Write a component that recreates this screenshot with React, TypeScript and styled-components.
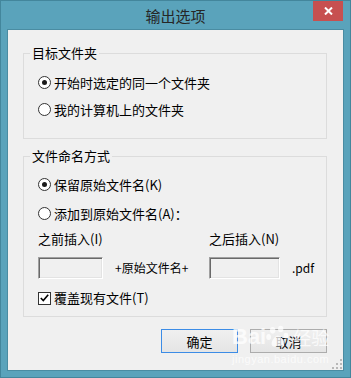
import React, { useState } from 'react'
import styled, { createGlobalStyle, css } from 'styled-components';

const GlobalStyle = createGlobalStyle`
  html, body {
    margin: 0;
    padding: 0;
    background: #5aa3bb;
  }
  body {
    font-family: "Noto Sans CJK SC", "Noto Sans", sans-serif;
    color: #000;
  }
`;

const Window = styled.div`
  position: relative;
  width: 351px;
  height: 378px;
  box-sizing: border-box;
  display: flex;
  flex-direction: column;
  padding: 0 6px 6px;
  background: #5aa3bb;
  border: 1px solid #43869c;
`;

const TitleBar = styled.div`
  display: grid;
  grid-template-columns: 1fr auto 1fr;
  height: 28px;
  flex-shrink: 0;
`;

const Title = styled.div`
  grid-column: 2;
  font-size: 15px;
  line-height: 29px;
  color: #262626;
`;

const CloseButton = styled.div`
  grid-column: 3;
  justify-self: end;
  display: flex;
  align-items: center;
  justify-content: center;
  width: 30px;
  height: 20px;
  margin-right: 1px;
  background: #c75050;
`;

const Client = styled.div`
  position: relative;
  flex: 1;
  display: flex;
  flex-direction: column;
  padding: 14px 16px 0 15px;
  background: #f0f0f0;
  border: 1px solid #4a8ca2;
`;

const Group = styled.fieldset<{ $gap?: number }>`
  margin: ${p => p.$gap || 0}px 0 0;
  padding: 0 6px ${p => p.$gap ? 9 : 15}px 6px;
  min-width: 0;
  border: 1px solid #dcdcdc;
  display: flex;
  flex-direction: column;
`;

const Legend = styled.legend`
  padding: 0 2px;
  font-size: 13px;
  line-height: 18px;
`;

const Body = styled.div<{ $top: number }>`
  display: flex;
  flex-direction: column;
  margin: ${p => p.$top}px 0 0 8px;
`;

const Row = styled.label<{ $h: number }>`
  display: flex;
  align-items: center;
  gap: 3px;
  height: ${p => p.$h}px;
  font-size: 13px;
  line-height: 18px;
  cursor: default;
`;

const Circle = styled.span<{ $on?: boolean }>`
  position: relative;
  width: 13px;
  height: 13px;
  box-sizing: border-box;
  border-radius: 50%;
  border: 1px solid #333;
  background: #fff;
  flex-shrink: 0;

  ${p => p.$on && css`
    &::after {
      content: '';
      position: absolute;
      left: 3px;
      top: 3px;
      width: 5px;
      height: 5px;
      border-radius: 50%;
      background: #1a1a1a;
    }
  `}
`;

const Box = styled.span`
  display: flex;
  align-items: center;
  justify-content: center;
  width: 13px;
  height: 13px;
  box-sizing: border-box;
  border: 1px solid #333;
  background: #fff;
  flex-shrink: 0;
`;

const Insert = styled.div`
  display: grid;
  grid-template-columns: 65px 106px 71px auto;
  row-gap: 9px;
  margin-top: 2px;
  font-size: 13px;
  line-height: 18px;
`;

const FieldLabel = styled.div`
  grid-column: span 2;
`;

const Field = styled.div`
  height: 22px;
  box-sizing: border-box;
  background: #f0f0f0;
  border-top: 1px solid #a0a0a0;
  border-left: 1px solid #a0a0a0;
  border-right: 1px solid #fff;
  border-bottom: 1px solid #fff;
  box-shadow: inset 1px 1px 0 #696969, inset -1px -1px 0 #e3e3e3;
`;

const Note = styled.div`
  display: flex;
  align-items: center;
  padding-left: 12px;
  font-size: 12px;
`;

const Buttons = styled.div`
  display: flex;
  justify-content: flex-end;
  gap: 12px;
  margin-top: 12px;
`;

const Button = styled.button<{ $primary?: boolean }>`
  width: 77px;
  height: 24px;
  padding: 0;
  font-family: inherit;
  font-size: 13px;
  color: #000;
  background: linear-gradient(#f0f0f0, #e5e5e5);
  border: 1px solid ${p => p.$primary ? '#3c8ce6' : '#acacac'};
`;

const Grip = styled.svg`
  position: absolute;
  right: 1px;
  bottom: 1px;
`;

// baidu jingyan watermark stamped over the screenshot
const Watermark = styled.div`
  position: absolute;
  left: 224px;
  top: 294px;
  display: flex;
  flex-direction: column;
  align-items: center;
  color: rgba(255, 255, 255, .75);
  pointer-events: none;
`;

const Mark = styled.div`
  display: flex;
  align-items: center;
  font-family: "Liberation Sans", sans-serif;
  font-size: 22px;
  font-weight: bold;
  line-height: 26px;
`;

const MarkCn = styled.span`
  margin-left: 3px;
  font-family: "Noto Sans CJK SC", sans-serif;
  font-size: 18px;
  font-weight: normal;
`;

const MarkUrl = styled.div`
  margin-top: 3px;
  font-family: "Liberation Sans", sans-serif;
  font-size: 11px;
  line-height: 12px;
  letter-spacing: .5px;
`;

export default function App() {
  const [folder, setFolder] = useState(0);
  const [naming, setNaming] = useState(0);
  const [overwrite, setOverwrite] = useState(true);

  return <>
    <GlobalStyle />
    <Window>
      <TitleBar>
        <Title>输出选项</Title>
        <CloseButton>
          <svg width="9" height="8" viewBox="0 0 9 8">
            <path d="M1 0.5 L8 7.5 M8 0.5 L1 7.5" stroke="#fff" strokeWidth="2" />
          </svg>
        </CloseButton>
      </TitleBar>
      <Client>
        <Group>
          <Legend>目标文件夹</Legend>
          <Body $top={7}>
            {['开始时选定的同一个文件夹', '我的计算机上的文件夹'].map((t, i) =>
              <Row key={t} $h={27} onClick={() => setFolder(i)}>
                <Circle $on={folder === i} />{t}
              </Row>)}
          </Body>
        </Group>
        <Group $gap={8}>
          <Legend>文件命名方式</Legend>
          <Body $top={5}>
            {['保留原始文件名(K)', '添加到原始文件名(A)：'].map((t, i) =>
              <Row key={t} $h={29} onClick={() => setNaming(i)}>
                <Circle $on={naming === i} />{t}
              </Row>)}
            <Insert>
              <FieldLabel>之前插入(I)</FieldLabel>
              <FieldLabel>之后插入(N)</FieldLabel>
              <Field />
              <Note>+原始文件名+</Note>
              <Field />
              <Note>.pdf</Note>
            </Insert>
            <Row $h={18} style={{ marginTop: 10 }} onClick={() => setOverwrite(!overwrite)}>
              <Box>
                {overwrite && <svg width="9" height="8" viewBox="0 0 9 8">
                  <path d="M0.8 4 L3.3 6.6 L8.2 0.8" fill="none" stroke="#000" strokeWidth="1.6" />
                </svg>}
              </Box>
              覆盖现有文件(T)
            </Row>
          </Body>
        </Group>
        <Buttons>
          <Button $primary>确定</Button>
          <Button>取消</Button>
        </Buttons>
        <Watermark>
          <Mark>Bai
            <svg width="24" height="24" viewBox="0 0 18 18">
              <g fill="rgba(255,255,255,.75)">
                <ellipse cx="5" cy="4" rx="2" ry="2.5" />
                <ellipse cx="11" cy="3" rx="2" ry="2.5" />
                <ellipse cx="2" cy="9" rx="1.8" ry="2.2" />
                <ellipse cx="15" cy="8" rx="1.8" ry="2.2" />
                <path d="M8 8 C5 10 3 14 5 16 C7 17 9 15.5 11 16 C14 17 15 13 12 10 C11 8.5 9.5 7.5 8 8 Z" />
              </g>
            </svg>
            <MarkCn>经验</MarkCn>
          </Mark>
          <MarkUrl>jingyan.baidu.com</MarkUrl>
        </Watermark>
        <Grip width="10" height="10" viewBox="0 0 10 10">
          <g fill="#b8b8b8">
            <rect x="8" y="0" width="2" height="2" />
            <rect x="4" y="4" width="2" height="2" />
            <rect x="8" y="4" width="2" height="2" />
            <rect x="0" y="8" width="2" height="2" />
            <rect x="4" y="8" width="2" height="2" />
            <rect x="8" y="8" width="2" height="2" />
          </g>
        </Grip>
      </Client>
    </Window>
  </>
}
